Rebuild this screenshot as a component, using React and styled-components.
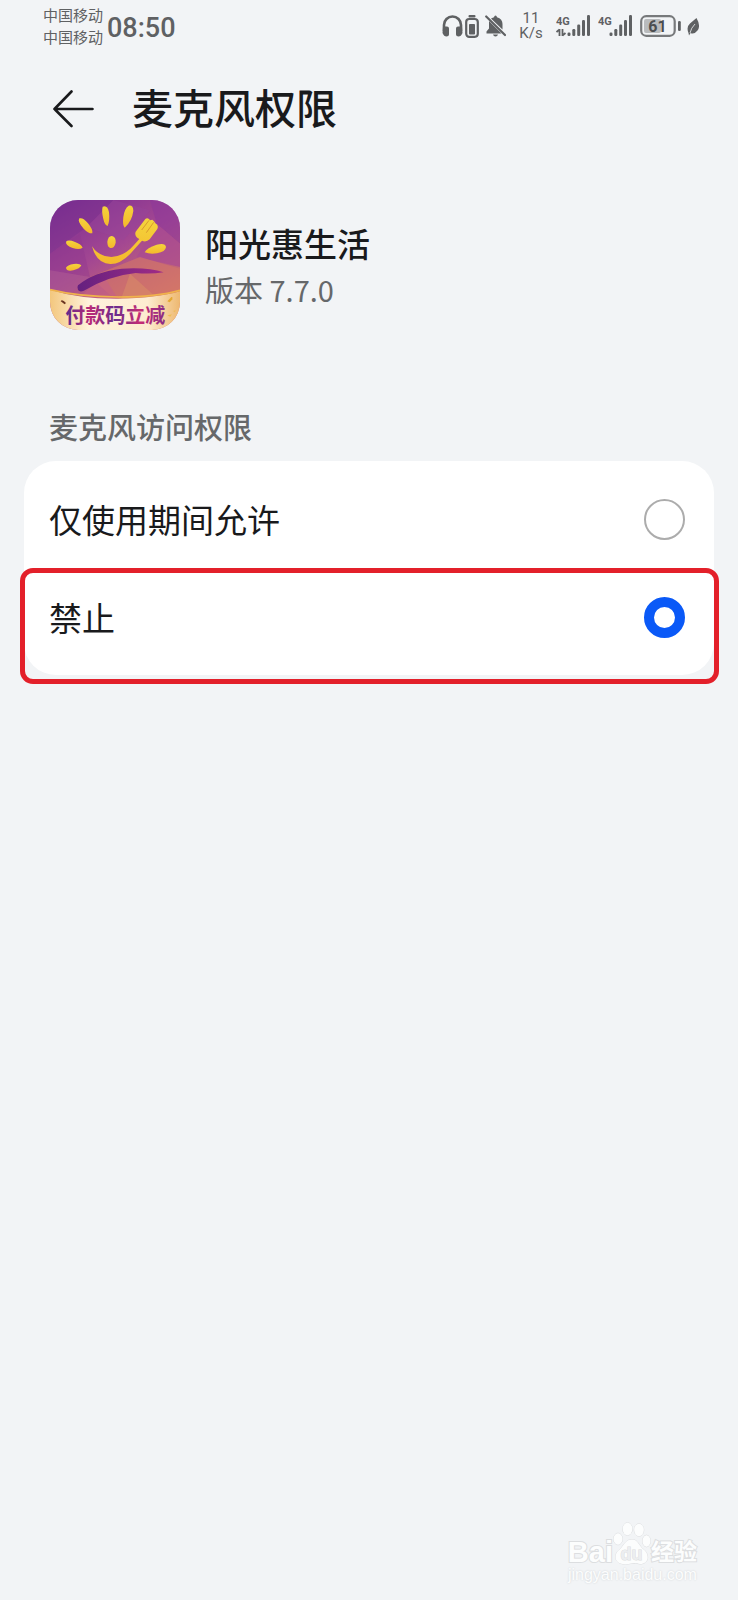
import React, { useState } from "react";
import styled, { createGlobalStyle } from "styled-components";

const GlobalStyle = createGlobalStyle`
  * {
    box-sizing: border-box;
  }

  body {
    margin: 0;
    background: #f2f4f6;
    color: #191a1c;
    font-family: "Noto Sans CJK SC", sans-serif;
  }
`;

const Page = styled.div`
  min-height: 100vh;
  display: flex;
  flex-direction: column;
`;

const StatusBar = styled.div`
  height: 52px;
  padding: 0 39px 0 43px;
  display: flex;
  align-items: center;
  justify-content: space-between;
  color: #5f6163;
  font-family: Roboto, "Noto Sans CJK SC", sans-serif;
`;

const StatusGroup = styled.div`
  display: flex;
  align-items: center;
  gap: ${({ $gap }) => $gap}px;
`;

const Carriers = styled.div`
  padding-top: 2px;
  font-size: 15px;
  line-height: 22px;
`;

const Clock = styled.time`
  padding-top: 4px;
  font-size: 27px;
  font-weight: 500;
  line-height: 32px;
`;

const Speed = styled.div`
  width: 24px;
  margin: 0 7px;
  font-size: 15px;
  line-height: 15px;
  text-align: center;
`;

const Header = styled.header`
  height: 114px;
  padding: 0 53px;
  display: flex;
  align-items: center;
  gap: 38px;
`;

const BackButton = styled.button`
  padding: 0;
  border: 0;
  background: none;
  color: inherit;
  display: flex;
  cursor: pointer;
`;

const Title = styled.h1`
  margin: 0;
  padding-top: 2px;
  font-family: Roboto, "Noto Sans CJK SC", sans-serif;
  font-size: 41px;
  font-weight: 500;
  line-height: 60px;
`;

const AppInfo = styled.section`
  padding: 34px 50px 0;
  display: flex;
  align-items: center;
  gap: 25px;
`;

const AppName = styled.h2`
  margin: 0;
  font-size: 33px;
  font-weight: 500;
  line-height: 48px;
`;

const Version = styled.p`
  margin: 0;
  font-size: 29px;
  line-height: 44px;
  color: #66686a;
`;

const Options = styled.fieldset`
  min-width: 0;
  margin: 76px 24px 0;
  padding: 0;
  border: 0;
`;

const OptionsLabel = styled.legend`
  padding: 0 25px;
  margin-bottom: 15px;
  font-size: 29px;
  font-weight: 500;
  line-height: 40px;
  color: #66686a;
`;

const Card = styled.div`
  padding: 9px 0;
  border-radius: 32px;
  background: #fff;
`;

const OptionRow = styled.label`
  position: relative;
  height: 98px;
  padding: 0 29px 0 25px;
  display: flex;
  align-items: center;
  justify-content: space-between;
  font-size: 33px;
  line-height: 48px;
  cursor: pointer;
`;

const Highlight = styled.span`
  position: absolute;
  inset: 0 -5px -18px -4px;
  border: 5px solid #e3202a;
  border-radius: 13px;
  pointer-events: none;
`;

const Radio = styled.input`
  appearance: none;
  width: 41px;
  height: 41px;
  margin: 0;
  border: 2px solid #acacac;
  border-radius: 50%;
  background: #fff;

  &:checked {
    border: 10px solid #0a59f7;
  }
`;

const Watermark = styled.footer`
  margin: auto 41px 15px auto;
  color: #fcfdfd;
  font-family: "Liberation Sans", "Noto Sans CJK SC", sans-serif;
`;

const WatermarkLogo = styled.div`
  display: flex;
  align-items: flex-end;
  -webkit-text-stroke: 2px #dcdee0;
  paint-order: stroke fill;
`;

const WatermarkText = styled.span`
  font-size: ${({ $size }) => $size}px;
  font-weight: 700;
  line-height: 26px;
`;

const WatermarkUrl = styled.div`
  font-size: 16px;
  line-height: 20px;
  text-align: center;
  text-shadow: 0 0 2px #cdd0d3;
`;

const HeadphonesIcon = () => (
  <svg width="21" height="22" viewBox="0 0 21 22" fill="currentColor" aria-hidden="true">
    <path d="M2 16V10a8.500 8.500 0 0 1 17 0v6" fill="none" stroke="currentColor" strokeWidth="2.600" />
    <path d="M1 11.500h4q2 0 2 2v6q0 2-2.500 2T0.500 18zM20 11.500h-4q-2 0-2 2v6q0 2 2.500 2t4-3.500z" />
  </svg>
);

const DeviceBatteryIcon = () => (
  <svg width="14" height="23" viewBox="0 0 14 23" fill="currentColor" aria-hidden="true">
    <rect x="3.500" y="0" width="7" height="2.400" rx="1" />
    <rect x="1.200" y="4" width="11.600" height="17.800" rx="3" fill="none" stroke="currentColor" strokeWidth="2.200" />
    <rect x="4" y="9" width="6" height="10.500" rx="0.800" />
  </svg>
);

const MutedBellIcon = () => (
  <svg width="21" height="22" viewBox="0 0 21 22" fill="currentColor" aria-hidden="true">
    <path d="M6 3.600Q8 2.300 9 2.200Q9.300 0.500 10.500 0.500T12 2.200Q17.500 3.700 17.500 9v5.500zM4 6L16.500 18.500H1.500v-2L4 13.500zM8 19.500h5q-0.500 2-2.500 2T8 19.500z" />
    <path d="M1.200 1.500L20 20" stroke="currentColor" strokeWidth="2.200" strokeLinecap="round" />
  </svg>
);

const SignalIcon = ({ active }) => (
  <svg width="36" height="24" viewBox="0 0 36 24" fill="currentColor" aria-hidden="true">
    <text x="0" y="11" fontFamily="Roboto, sans-serif" fontSize="11" fontWeight="700">
      4G
    </text>
    {active && (
      <path d="M3.500 15v7M3.500 15.500L0.500 18M6.500 22v-7M6.500 21.500L9.500 19" fill="none" stroke="currentColor" strokeWidth="1.800" />
    )}
    <rect x="11.500" y="18.500" width="3" height="3.500" rx="1.200" />
    <rect x="16.300" y="15" width="3" height="7" rx="1.200" />
    <rect x="21.200" y="10.500" width="3" height="11.500" rx="1.200" />
    <rect x="26" y="6" width="3" height="16" rx="1.200" />
    <rect x="31" y="1" width="3" height="21" rx="1.200" />
  </svg>
);

const BatteryIcon = ({ level }) => (
  <svg width="41" height="22" viewBox="0 0 41 22" aria-hidden="true">
    <rect x="4" y="4" width="17" height="14" rx="2" fill="#b9bbbd" />
    <rect x="1.200" y="1.200" width="33.500" height="19.600" rx="5" fill="none" stroke="#77797b" strokeWidth="2.200" />
    <rect x="38" y="6" width="2.800" height="10" rx="1.300" fill="currentColor" />
    <text x="17.500" y="17" textAnchor="middle" fontFamily="Roboto, sans-serif" fontSize="16" fontWeight="700" fill="#4c4e50">
      {level}
    </text>
  </svg>
);

const LeafIcon = () => (
  <svg width="12" height="19" viewBox="0 0 12 19" aria-hidden="true">
    <path d="M9.500 1Q14 9 10.500 13.500T3.500 16L2 18.500L1.500 16Q-1 10 3 6.500T9.500 1z" fill="currentColor" />
    <path d="M3 16Q4 11 8 7" fill="none" stroke="#f2f4f6" strokeWidth="0.800" />
  </svg>
);

const BackIcon = () => (
  <svg width="41" height="38" viewBox="0 0 41 38" fill="none" stroke="currentColor" strokeWidth="2.600" strokeLinecap="round" strokeLinejoin="round" aria-hidden="true">
    <path d="M39.500 19H1.500M18.500 1.500L1.500 19L18.500 36" />
  </svg>
);

const AppLogo = () => (
  <svg width="130" height="130" viewBox="30 29 390 390" role="img" aria-label="阳光惠生活">
    <defs>
      <clipPath id="logoShape">
        <rect x="30" y="29" width="390" height="390" rx="84" />
      </clipPath>
      <linearGradient id="logoSky" x1="0.200" y1="0" x2="0.700" y2="0.900">
        <stop offset="0" stopColor="#7e2f92" />
        <stop offset="0.450" stopColor="#a34792" />
        <stop offset="1" stopColor="#d77a66" />
      </linearGradient>
      <linearGradient id="logoBanner" x1="0" y1="0" x2="1" y2="0">
        <stop offset="0" stopColor="#f3c77e" />
        <stop offset="0.300" stopColor="#fff2dc" />
        <stop offset="0.750" stopColor="#fdecd0" />
        <stop offset="1" stopColor="#eeb870" />
      </linearGradient>
      <linearGradient id="logoText" x1="0" y1="0" x2="1" y2="0">
        <stop offset="0" stopColor="#5b2a8c" />
        <stop offset="0.250" stopColor="#b92a78" />
        <stop offset="0.500" stopColor="#6a2c8e" />
        <stop offset="0.750" stopColor="#c62d74" />
        <stop offset="1" stopColor="#8a2c86" />
      </linearGradient>
      <linearGradient id="logoSwoosh" x1="0" y1="0" x2="1" y2="0">
        <stop offset="0" stopColor="#64207f" />
        <stop offset="1" stopColor="#a02c86" />
      </linearGradient>
      <linearGradient id="logoGold" x1="0" y1="0" x2="0" y2="1">
        <stop offset="0" stopColor="#f4d43c" />
        <stop offset="1" stopColor="#f5b82c" />
      </linearGradient>
    </defs>
    <g clipPath="url(#logoShape)">
      <rect x="30" y="29" width="390" height="390" fill="url(#logoSky)" />
      <path d="M30 29h190L140 110L30 190z" fill="#78308f" opacity="0.450" />
      <path d="M220 29L140 110L250 150L330 60z" fill="#97459b" opacity="0.400" />
      <path d="M330 29H420V160L350 100z" fill="#8d389a" opacity="0.600" />
      <path d="M350 100L420 160V230L290 200z" fill="#a84a93" opacity="0.700" />
      <path d="M30 190L120 130L150 260L30 240z" fill="#8f378f" opacity="0.400" />
      <path d="M30 240L150 260L80 320H30z" fill="#a85592" opacity="0.600" />
      <path d="M150 260L300 200L420 235V340H240z" fill="#d27568" opacity="0.650" />
      <path d="M120 320L190 255L240 335z" fill="#c45f87" opacity="0.600" />
      <path d="M240 335L270 250L370 340z" fill="#d88a68" opacity="0.600" />

      <g fill="url(#logoGold)">
        <path d="M188 49Q203 43 207 66Q210 91 203 107Q194 105 190 86Q184 62 188 49z" />
        <path d="M266 46Q280 44 280 62Q276 93 254 112Q247 105 250 80Q253 55 266 46z" />
        <path d="M118 84Q130 81 144 99Q160 119 157 129Q145 130 131 115Q111 94 118 84z" />
        <path d="M78 154Q85 147 105 155Q124 162 128 172Q118 179 98 173Q77 166 78 154z" />
        <path d="M78 232Q82 224 101 221Q119 219 124 225Q120 235 100 240Q79 244 78 232z" />
        <path d="M314 186Q320 173 350 163Q376 156 378 170Q377 184 351 189Q329 192 314 186z" />
        <path d="M202 155Q204 136 216 137Q228 139 227 157Q223 175 211 173Q202 171 202 155z" />
        <path d="M156 168Q176 199 214 200Q253 198 282 164L298 146Q282 138 287 124L316 86Q321 81 327 86L330 90L337 88L342 93L346 99Q357 104 352 116L329 147Q318 157 306 151L283 177Q246 222 211 221Q170 220 156 168z" />
      </g>
      <path d="M327 90L305 119M341 96L319 127" fill="none" stroke="#d9982f" strokeWidth="3" />
      <path d="M114 285Q160 245 245 235Q324 230 371 246Q332 252 287 248Q207 256 130 302Q119 306 114 299Q110 291 114 285z" fill="url(#logoSwoosh)" />

      <path d="M30 298Q120 326 235 325T420 303V419H30z" fill="url(#logoBanner)" />
      <path d="M30 298Q120 320 235 320T420 300" fill="none" stroke="#f0b34b" strokeWidth="5" />
      <path d="M62 333Q66 325 78 338L74 342z" fill="#6b3521" />
      <path d="M382 333L394 320Q399 318 397 327L389 336z" fill="#e5a934" />
      <path d="M382 375l14-3-5 7zM399 362l8-3-2 7z" fill="#eebd58" />
      <text x="226" y="397" textAnchor="middle" fontFamily="Noto Sans CJK SC, sans-serif" fontSize="60" fontWeight="700" fill="url(#logoText)">
        付款码立减
      </text>
    </g>
  </svg>
);

const PawIcon = () => (
  <svg width="38" height="43" viewBox="0 0 38 43" fill="currentColor" stroke="#dcdee0" strokeWidth="1" aria-hidden="true">
    <ellipse cx="5" cy="17" rx="4.500" ry="5.800" />
    <ellipse cx="14.500" cy="7" rx="4.800" ry="6.200" />
    <ellipse cx="26" cy="8" rx="4.800" ry="6.200" />
    <ellipse cx="33.500" cy="19" rx="4" ry="5.800" />
    <path d="M19 17.500C25 17.500 26 24 30 27C37 32 36 42 27 42Q22 40.500 18 41.500T10 42C1 41 1 32 6 28C11 24 12 17.500 19 17.500z" />
    <text x="18.500" y="38" textAnchor="middle" fontFamily="Liberation Sans, sans-serif" fontSize="18" fontWeight="700" fill="#eceef0">
      du
    </text>
  </svg>
);

const options = [
  { value: "whileInUse", label: "仅使用期间允许" },
  { value: "deny", label: "禁止", highlighted: true },
];

export default function App() {
  const [permission, setPermission] = useState("deny");

  return (
    <>
      <GlobalStyle />
      <Page lang="zh-CN">
        <StatusBar>
          <StatusGroup $gap={4}>
            <Carriers>
              <div>中国移动</div>
              <div>中国移动</div>
            </Carriers>
            <Clock>08:50</Clock>
          </StatusGroup>
          <StatusGroup $gap={6}>
            <StatusGroup $gap={2}>
              <HeadphonesIcon />
              <DeviceBatteryIcon />
            </StatusGroup>
            <MutedBellIcon />
            <Speed>
              <div>11</div>
              <div>K/s</div>
            </Speed>
            <SignalIcon active />
            <SignalIcon />
            <BatteryIcon level={61} />
            <LeafIcon />
          </StatusGroup>
        </StatusBar>

        <Header>
          <BackButton type="button" aria-label="返回">
            <BackIcon />
          </BackButton>
          <Title>麦克风权限</Title>
        </Header>

        <main>
          <AppInfo>
            <AppLogo />
            <div>
              <AppName>阳光惠生活</AppName>
              <Version>版本 7.7.0</Version>
            </div>
          </AppInfo>

          <Options>
            <OptionsLabel>麦克风访问权限</OptionsLabel>
            <Card>
              {options.map(({ value, label, highlighted }) => (
                <OptionRow key={value} htmlFor={value}>
                  {label}
                  <Radio
                    type="radio"
                    id={value}
                    name="permission"
                    value={value}
                    checked={permission === value}
                    onChange={() => setPermission(value)}
                  />
                  {highlighted && <Highlight />}
                </OptionRow>
              ))}
            </Card>
          </Options>
        </main>

        <Watermark>
          <WatermarkLogo>
            <WatermarkText $size={29}>Bai</WatermarkText>
            <PawIcon />
            <WatermarkText $size={23}>经验</WatermarkText>
          </WatermarkLogo>
          <WatermarkUrl>jingyan.baidu.com</WatermarkUrl>
        </Watermark>
      </Page>
    </>
  );
}
